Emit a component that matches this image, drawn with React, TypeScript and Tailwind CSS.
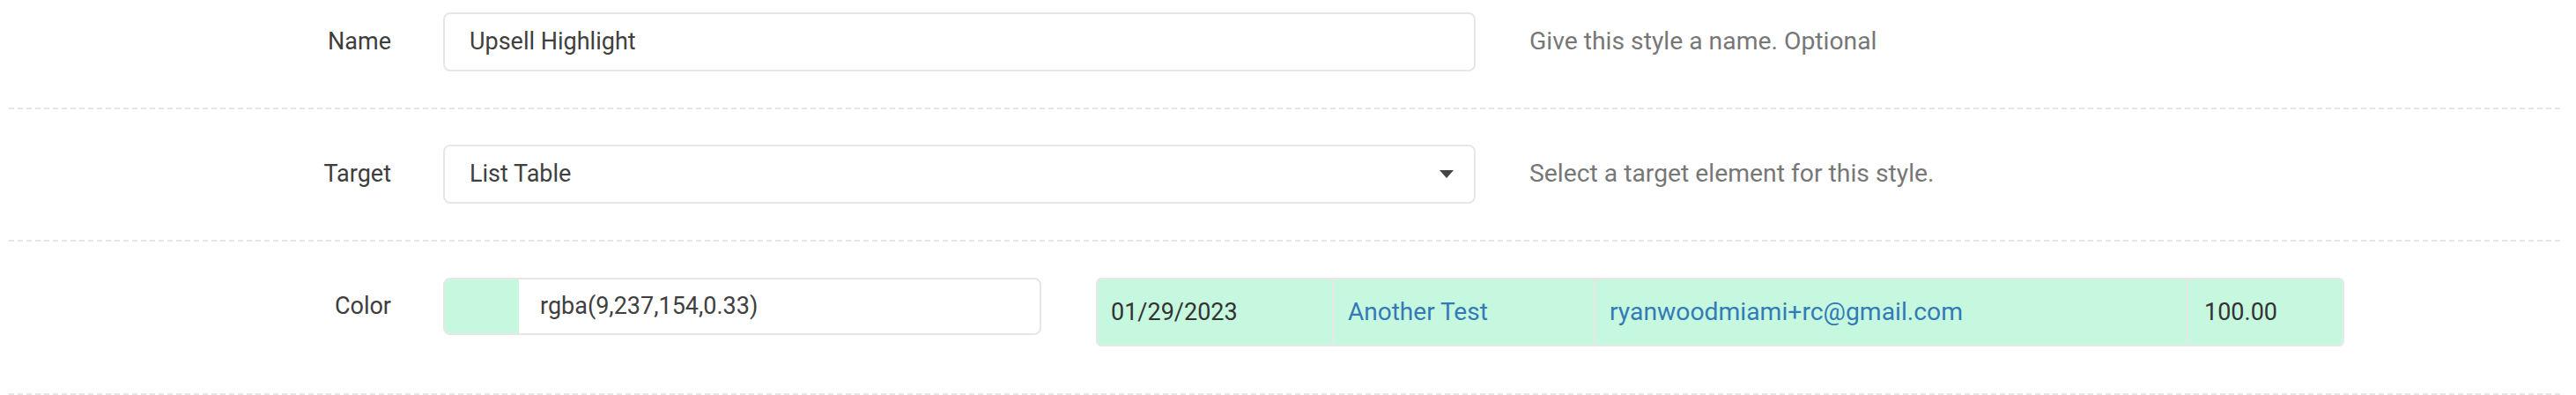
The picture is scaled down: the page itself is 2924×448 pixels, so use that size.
import React from "react";

function Divider() {
  return (
    <div className="h-[2px] w-full bg-[image:repeating-linear-gradient(to_right,#e3e6ea_0px,#e3e6ea_6px,transparent_6px,transparent_10px)]" />
  );
}

function Label({ children }: { children: React.ReactNode }) {
  return (
    <div className="w-[434px] shrink-0 text-right text-[27px] text-[#3d3d3d]">
      {children}
    </div>
  );
}

function Caret() {
  return (
    <svg width="16" height="9" viewBox="0 0 16 9" className="shrink-0">
      <path d="M0 0 H16 L8 9 Z" fill="#444" />
    </svg>
  );
}

export default function App() {
  return (
    <div className="h-[448px] w-[2924px] overflow-hidden bg-white font-['Roboto',sans-serif]">
      <div className="pl-[10px] pr-[14px]">
        {/* Name */}
        <div className="flex items-center pt-[14px] pb-[41px]">
          <Label>Name</Label>
          <div className="ml-[59px] flex h-[67px] w-[1172px] items-center rounded-[8px] border-2 border-[#e6e6e6] pl-[28px] text-[27px] text-[#404040]">
            Upsell Highlight
          </div>
          <div className="ml-[61px] text-[28.3px] text-[#777]">
            Give this style a name. Optional
          </div>
        </div>
        <Divider />

        {/* Target */}
        <div className="flex items-center pt-[40px] pb-[41px]">
          <Label>Target</Label>
          <div className="ml-[59px] flex h-[67px] w-[1172px] items-center justify-between rounded-[8px] border-2 border-[#e4e7eb] pl-[28px] pr-[23px] text-[27px] text-[#404040]">
            <span>List Table</span>
            <Caret />
          </div>
          <div className="ml-[61px] text-[28.3px] text-[#777]">
            Select a target element for this style.
          </div>
        </div>
        <Divider />

        {/* Color */}
        <div className="flex items-start pt-[41px] pb-[53px]">
          <div className="flex h-[65px] items-center">
            <Label>Color</Label>
          </div>
          <div className="ml-[59px] flex h-[65px] w-[679px] overflow-hidden rounded-[8px] border-2 border-[#e6e6e6]">
            <div className="w-[84px] shrink-0 bg-[#c5f8de]" />
            <div className="flex items-center pl-[24px] text-[27px] text-[#404040]">
              rgba(9,237,154,0.33)
            </div>
          </div>
          <div className="ml-[62px] flex h-[78px] w-[1417px] overflow-hidden rounded-[6px] border-2 border-[#e8e8e8] bg-[#c5f8de] text-[27px]">
            <div className="flex w-[266px] shrink-0 items-center pl-[15px] text-[#333]">
              01/29/2023
            </div>
            <div className="flex w-[297px] shrink-0 items-center border-l-2 border-[#e9e6e6] pl-[16px] text-[28px] text-[#337ab7]">
              Another Test
            </div>
            <div className="flex w-[673px] shrink-0 items-center border-l-2 border-[#e9e6e6] pl-[16px] text-[28.3px] text-[#337ab7]">
              ryanwoodmiami+rc@gmail.com
            </div>
            <div className="flex flex-1 items-center border-l-2 border-[#e9e6e6] pl-[18px] text-[#333]">
              100.00
            </div>
          </div>
        </div>
        <Divider />
      </div>
    </div>
  );
}
